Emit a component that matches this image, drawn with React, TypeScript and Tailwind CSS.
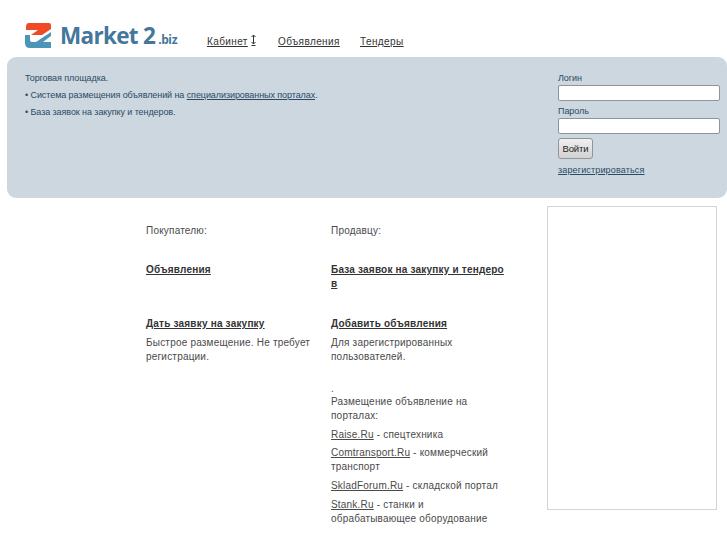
const linkRow = "text-[#4a4a4a] underline";
const headRow = "font-bold text-[#333] underline";

function Logo() {
  return (
    <div className="flex items-center w-[153px] h-[26px] whitespace-nowrap">
      <svg width="26" height="25" viewBox="0 0 26 25" className="shrink-0">
        <path d="M4 0 H24 Q26 0 26 2 V6 L17 12 H6 L13 7 H1 V4 Q1 0 4 0 Z" fill="#ee4a26" />
        <path d="M26 9 L11 19 H7 Q5 19 5 17 V12 H0 V20 Q0 25 5 25 H26 V19 H18 L26 13 Z" fill="#4a95b9" />
      </svg>
      <span className="ml-[9px] mt-[3px] text-[22.5px] leading-none font-bold tracking-[-0.7px] text-[#44779b] font-['Open_Sans',sans-serif]">
        Market 2
      </span>
      <span className="ml-[3px] mt-[10px] text-[12px] leading-none font-bold tracking-[-0.4px] text-[#44779b] font-['Open_Sans',sans-serif]">
        .biz
      </span>
    </div>
  );
}

export default function App() {
  return (
    <div className="w-[727px] h-[545px] overflow-hidden bg-white font-['Liberation_Sans',sans-serif] text-[10px] tracking-[0.2px] text-[#4a4a4a]">
      {/* Header */}
      <div className="flex h-[57px] pl-[25px] pt-[22px]">
        <Logo />
        <nav className="flex ml-[29px] pt-[13px] text-[10px] tracking-[0.4px] leading-[14px] text-[#333]">
          <div className="flex items-start w-[71px] gap-[2px]">
            <a className="underline">Кабинет</a>
            <svg width="7" height="12" viewBox="0 0 7 12" className="-mt-[1px]" fill="none" stroke="#333" strokeWidth="1">
              <path d="M3.5 1 V10 M1.5 3 L3.5 1 L5.5 3 M1.5 8 L3.5 10 L5.5 8 M1.5 11.5 H5.5" />
            </svg>
          </div>
          <a className="underline w-[82px]">Объявления</a>
          <a className="underline">Тендеры</a>
        </nav>
      </div>

      {/* Top panel */}
      <div className="flex justify-between ml-[7px] w-[720px] h-[141px] bg-[#cdd7df] rounded-[9px] pl-[18px] pt-[15px] text-[#2c4a63] tracking-[-0.08px]">
        <div className="flex flex-col gap-[5px] text-[9px] leading-[12px]">
          <p>Торговая площадка.</p>
          <p>
            • Система размещения объявлений на{" "}
            <a className="underline">специализированных порталах</a>.
          </p>
          <p>• База заявок на закупку и тендеров.</p>
        </div>
        <div className="flex flex-col w-[169px] text-[9px] leading-[12px]">
          <label className="mb-[1px]">Логин</label>
          <input className="w-[162px] h-[16px] bg-white border border-[#8a959c] rounded-[2px] mb-[3px]" />
          <label className="mb-[1px] mt-[1px]">Пароль</label>
          <input className="w-[162px] h-[16px] bg-white border border-[#8a959c] rounded-[2px]" />
          <button className="w-[35px] h-[21px] mt-[4px] bg-gradient-to-b from-[#f0f0f0] to-[#d2d2d2] border border-[#8f9599] rounded-[3px] text-[9.5px] text-[#222]">
            Войти
          </button>
          <a className="underline mt-[5px] tracking-[0.15px]">зарегистрироваться</a>
        </div>
      </div>

      {/* Content */}
      <div className="flex pl-[146px] pt-[8px]">
        <div className="w-[185px] pt-[18px] leading-[14px]">
          <p>Покупателю:</p>
          <p className={`mt-[25px] ${headRow}`}>Объявления</p>
          <p className={`mt-[40px] ${headRow}`}>Дать заявку на закупку</p>
          <p className="mt-[5px] w-[170px]">Быстрое размещение. Не требует регистрации.</p>
        </div>
        <div className="w-[216px] pt-[18px] leading-[14px]">
          <p>Продавцу:</p>
          <p className={`mt-[25px] w-[177px] break-all ${headRow}`}>База заявок на закупку и тендеров</p>
          <p className={`mt-[26px] ${headRow}`}>Добавить объявления</p>
          <p className="mt-[5px] w-[170px]">Для зарегистрированных пользователей.</p>
          <p className="mt-[18px] h-[13px]">.</p>
          <p className="w-[170px]">Размещение объявление на порталах:</p>
          <p className="mt-[5px]"><a className={linkRow}>Raise.Ru</a> - спецтехника</p>
          <p className="mt-[4px] w-[170px]"><a className={linkRow}>Comtransport.Ru</a> - коммерческий транспорт</p>
          <p className="mt-[5px]"><a className={linkRow}>SkladForum.Ru</a> - складской портал</p>
          <p className="mt-[5px] w-[170px]"><a className={linkRow}>Stank.Ru</a> - станки и обрабатывающее оборудование</p>
        </div>
        <div className="w-[170px] h-[304px] border border-[#d5d5d5] shrink-0"></div>
      </div>
    </div>
  );
}
